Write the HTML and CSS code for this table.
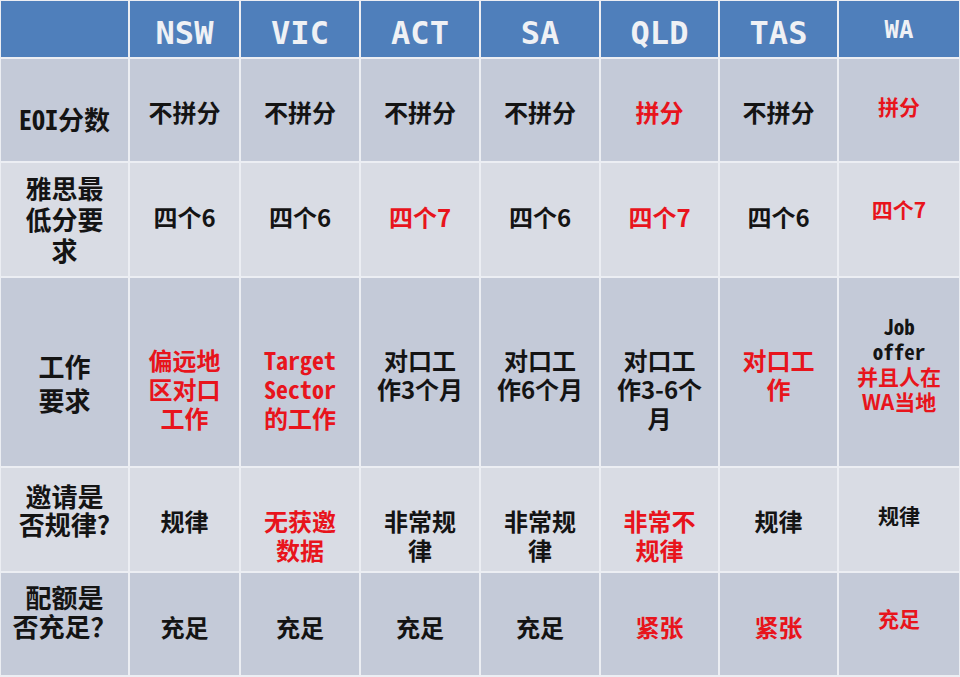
FILE: index.html
```html
<!DOCTYPE html>
<html lang="zh-CN">
<head>
<meta charset="utf-8">
<title>州担保对比</title>
<link rel="stylesheet" href="styles.css">
</head>
<body>
<div class="table">
  <div class="hd"></div>
  <div class="hd">NSW</div>
  <div class="hd">VIC</div>
  <div class="hd">ACT</div>
  <div class="hd">SA</div>
  <div class="hd">QLD</div>
  <div class="hd">TAS</div>
  <div class="hd hd-wa">WA</div>

  <div class="rh r1"><span class="hw">EOI</span>分数</div>
  <div class="c r1">不拼分</div>
  <div class="c r1">不拼分</div>
  <div class="c r1">不拼分</div>
  <div class="c r1">不拼分</div>
  <div class="c r1 red">拼分</div>
  <div class="c r1">不拼分</div>
  <div class="wa r1 red"><div>拼分</div></div>

  <div class="rh r2">雅思最<br>低分要<br>求</div>
  <div class="c r2">四个6</div>
  <div class="c r2">四个6</div>
  <div class="c r2 red">四个7</div>
  <div class="c r2">四个6</div>
  <div class="c r2 red">四个7</div>
  <div class="c r2">四个6</div>
  <div class="wa r2 red"><div>四个7</div></div>

  <div class="rh r3">工作<br>要求</div>
  <div class="c r3 red">偏远地<br>区对口<br>工作</div>
  <div class="c r3 red"><span class="hw">Target</span><br><span class="hw">Sector</span><br>的工作</div>
  <div class="c r3">对口工<br>作3个月</div>
  <div class="c r3">对口工<br>作6个月</div>
  <div class="c r3">对口工<br>作3-6个<br>月</div>
  <div class="c r3 red">对口工<br>作</div>
  <div class="wa r3"><div><span class="hw">Job</span><br><span class="hw">offer</span><br><span class="red">并且人在<br>WA当地</span></div></div>

  <div class="rh r4">邀请是<br>否规律?</div>
  <div class="c r4">规律</div>
  <div class="c r4 red">无获邀<br>数据</div>
  <div class="c r4">非常规<br>律</div>
  <div class="c r4">非常规<br>律</div>
  <div class="c r4 red">非常不<br>规律</div>
  <div class="c r4">规律</div>
  <div class="wa r4"><div>规律</div></div>

  <div class="rh r5">配额是<br>否充足？</div>
  <div class="c r5">充足</div>
  <div class="c r5">充足</div>
  <div class="c r5">充足</div>
  <div class="c r5">充足</div>
  <div class="c r5 red">紧张</div>
  <div class="c r5 red">紧张</div>
  <div class="wa r5 red"><div>充足</div></div>
</div>
</body>
</html>
```

FILE: styles.css
```css
html, body {
  margin: 0;
  padding: 0;
  background: #ffffff;
}

body {
  width: 960px;
  height: 677px;
  overflow: hidden;
  font-family: "Noto Sans CJK SC", "Noto Sans", sans-serif;
  font-weight: 700;
  color: #141414;
}

.table {
  display: grid;
  grid-template-columns: 127px 109px 118px 118px 118px 117px 117px 1fr;
  grid-template-rows: 56px 102px 113px 188px 103px 102px;
  gap: 2px;
  padding: 1px 1px 2px 1px;
  background: #eceef3;
  height: 677px;
  box-sizing: border-box;
}

.hd {
  background: #4f7fbb;
  color: #eff1f5;
  font-family: "DejaVu Sans Mono", "Liberation Mono", monospace;
  font-size: 32px;
  font-weight: 700;
  text-align: center;
  padding-top: 14px;
  line-height: 37px;
  box-sizing: border-box;
}

.hd-wa {
  font-size: 24px;
  padding-top: 16px;
  line-height: 27px;
}

.r1, .r3, .r5 { background: #c4cad8; }
.r2, .r4 { background: #d9dce4; }

.red { color: #e8141c; }

.hw {
  font-family: "Noto Sans Mono CJK SC", "DejaVu Sans Mono", monospace;
}

/* first column headings */
.rh {
  font-size: 26px;
  line-height: 30px;
  text-align: center;
}
.rh.r1 { padding-top: 45px; }
.rh.r2 { padding-top: 9px; line-height: 31px; }
.rh.r3 { padding-top: 71px; line-height: 34px; }
.rh.r4 { padding-top: 14px; line-height: 28px; }
.rh.r5 { padding-top: 9px; line-height: 29px; }

/* NSW .. TAS cells */
.c {
  font-size: 24px;
  line-height: 29px;
  text-align: center;
  padding-top: 38px;
}
.c.r2, .c.r5 { padding-top: 39px; }
.c.r3 { padding-top: 67px; }

/* WA column */
.wa {
  font-size: 21px;
  line-height: 25px;
  text-align: center;
  display: flex;
  flex-direction: column;
  justify-content: center;
  box-sizing: border-box;
}
.wa.r1 { padding-bottom: 8px; }
.wa.r2 { padding-bottom: 21px; }
.wa.r3 { padding-bottom: 16px; }
.wa.r4 { padding-bottom: 9px; }
.wa.r5 { padding-bottom: 12px; }
```
